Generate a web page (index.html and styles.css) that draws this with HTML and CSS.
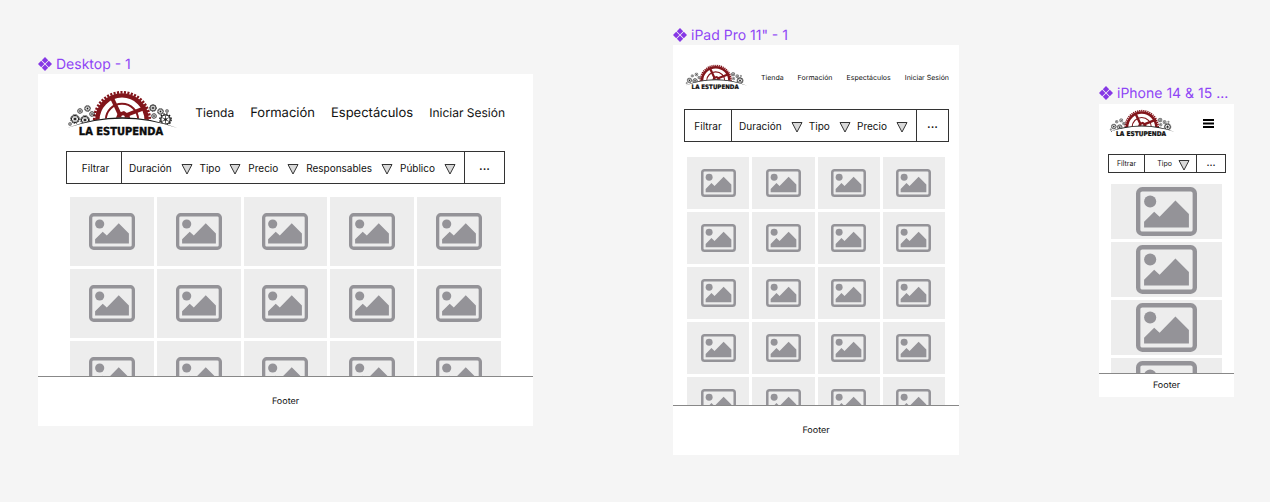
FILE: index.html
```html
<!DOCTYPE html>
<html lang="es">
<head>
<meta charset="utf-8">
<title>La Estupenda</title>
<link rel="stylesheet" href="styles.css">
</head>
<body>
<svg class="defs" aria-hidden="true">
  <symbol id="photo" viewBox="0 0 181 145">
    <rect x="6.5" y="6.5" width="168" height="132" rx="12" fill="none" stroke="currentColor" stroke-width="13"/>
    <circle cx="42" cy="43" r="18" fill="currentColor"/>
    <path d="M24 120V103L54 73L70 88L117 40L157 80V120Z" fill="currentColor"/>
  </symbol>
  <symbol id="tri" viewBox="0 0 12 12">
    <path d="M1 1.5H11L6 11Z" fill="#d9d9d9" stroke="#333" stroke-width="1"/>
  </symbol>
  <symbol id="component" viewBox="0 0 14 14">
    <path d="M7 0L10.2 3.2L7 6.4L3.8 3.2ZM7 7.6L10.2 10.8L7 14L3.8 10.8ZM3.2 3.8L6.4 7L3.2 10.2L0 7ZM10.8 3.8L14 7L10.8 10.2L7.6 7Z" fill="currentColor"/>
  </symbol>
  <symbol id="cog" viewBox="-10 -10 20 20">
    <circle r="8.8" fill="none" stroke="#1a1a1a" stroke-width="2" stroke-dasharray="2.5 2.1"/>
    <circle r="7.2" fill="none" stroke="#1a1a1a" stroke-width="2"/>
    <path d="M0-6V6M-5.2-3L5.2 3M-5.2 3L5.2-3" stroke="#1a1a1a" stroke-width="1.1"/>
    <circle r="2" fill="#1a1a1a"/>
  </symbol>
  <symbol id="logo" viewBox="0 0 111 46">
    <clipPath id="horizon"><path d="M0 0H111V38Q55 17 0 38Z"/></clipPath>
    <g clip-path="url(#horizon)">
      <g fill="none" stroke="#82151b">
        <circle cx="55" cy="30" r="27.7" stroke-width="2.8" stroke-dasharray="2.1 1.38"/>
        <circle cx="55" cy="30" r="24.6" stroke-width="4.4"/>
        <circle cx="55" cy="30" r="16.2" stroke-width="2"/>
        <path d="M44.5 7L53 25" stroke-width="4"/>
        <path d="M57 26L79 17.5" stroke-width="4"/>
      </g>
      <path d="M48 30L51 23L57 21L62 24.5L64 30Z" fill="#82151b"/>
      <circle cx="56" cy="27" r="1.8" fill="#fff"/>
      <use href="#cog" x="3" y="24" width="10" height="10"/>
      <use href="#cog" x="10" y="18" width="6" height="6"/>
      <use href="#cog" x="17" y="15" width="7" height="7"/>
      <use href="#cog" x="13" y="25" width="10" height="10"/>
      <use href="#cog" x="22" y="21" width="6" height="6"/>
      <use href="#cog" x="1" y="32" width="4" height="4"/>
      <use href="#cog" x="82" y="14" width="8" height="8"/>
      <use href="#cog" x="84" y="23" width="6" height="6"/>
      <use href="#cog" x="90" y="18" width="7" height="7"/>
      <use href="#cog" x="98" y="19" width="4" height="4"/>
      <use href="#cog" x="92" y="23" width="13" height="13"/>
    </g>
    <path d="M0 38Q55 16.500 110.500 38Q55 19.500 0 38Z" fill="#1a1a1a"/>
  </symbol>
</svg>

<main class="canvas">
  <section class="board desktop">
    <h2 class="board-name"><svg><use href="#component"/></svg>Desktop - 1</h2>
    <div class="frame">
      <header class="top">
        <svg class="logo" viewBox="0 0 111 46"><use href="#logo"/><text x="54" y="45" text-anchor="middle">LA ESTUPENDA</text></svg>
        <nav class="nav"><a href="#">Tienda</a><a href="#" class="wide">Formación</a><a href="#" class="wide">Espectáculos</a><a href="#">Iniciar Sesión</a></nav>
      </header>
      <div class="filters">
        <button class="lead">Filtrar</button>
        <div class="options">
          <button>Duración<svg><use href="#tri"/></svg></button>
          <button>Tipo<svg><use href="#tri"/></svg></button>
          <button>Precio<svg><use href="#tri"/></svg></button>
          <button>Responsables<svg><use href="#tri"/></svg></button>
          <button>Público<svg><use href="#tri"/></svg></button>
        </div>
        <button class="more">...</button>
      </div>
      <div class="gallery">
        <div class="card"><svg><use href="#photo"/></svg></div><div class="card"><svg><use href="#photo"/></svg></div><div class="card"><svg><use href="#photo"/></svg></div><div class="card"><svg><use href="#photo"/></svg></div><div class="card"><svg><use href="#photo"/></svg></div>
        <div class="card"><svg><use href="#photo"/></svg></div><div class="card"><svg><use href="#photo"/></svg></div><div class="card"><svg><use href="#photo"/></svg></div><div class="card"><svg><use href="#photo"/></svg></div><div class="card"><svg><use href="#photo"/></svg></div>
        <div class="card"><svg><use href="#photo"/></svg></div><div class="card"><svg><use href="#photo"/></svg></div><div class="card"><svg><use href="#photo"/></svg></div><div class="card"><svg><use href="#photo"/></svg></div><div class="card"><svg><use href="#photo"/></svg></div>
      </div>
      <footer class="foot">Footer</footer>
    </div>
  </section>

  <section class="board tablet">
    <h2 class="board-name"><svg><use href="#component"/></svg>iPad Pro 11" - 1</h2>
    <div class="frame">
      <header class="top">
        <svg class="logo" viewBox="0 0 111 46"><use href="#logo"/><text x="54" y="45" text-anchor="middle">LA ESTUPENDA</text></svg>
        <nav class="nav"><a href="#">Tienda</a><a href="#">Formación</a><a href="#">Espectáculos</a><a href="#">Iniciar Sesión</a></nav>
      </header>
      <div class="filters">
        <button class="lead">Filtrar</button>
        <div class="options">
          <button>Duración<svg><use href="#tri"/></svg></button>
          <button>Tipo<svg><use href="#tri"/></svg></button>
          <button>Precio<svg><use href="#tri"/></svg></button>
        </div>
        <button class="more">...</button>
      </div>
      <div class="gallery">
        <div class="card"><svg><use href="#photo"/></svg></div><div class="card"><svg><use href="#photo"/></svg></div><div class="card"><svg><use href="#photo"/></svg></div><div class="card"><svg><use href="#photo"/></svg></div>
        <div class="card"><svg><use href="#photo"/></svg></div><div class="card"><svg><use href="#photo"/></svg></div><div class="card"><svg><use href="#photo"/></svg></div><div class="card"><svg><use href="#photo"/></svg></div>
        <div class="card"><svg><use href="#photo"/></svg></div><div class="card"><svg><use href="#photo"/></svg></div><div class="card"><svg><use href="#photo"/></svg></div><div class="card"><svg><use href="#photo"/></svg></div>
        <div class="card"><svg><use href="#photo"/></svg></div><div class="card"><svg><use href="#photo"/></svg></div><div class="card"><svg><use href="#photo"/></svg></div><div class="card"><svg><use href="#photo"/></svg></div>
        <div class="card"><svg><use href="#photo"/></svg></div><div class="card"><svg><use href="#photo"/></svg></div><div class="card"><svg><use href="#photo"/></svg></div><div class="card"><svg><use href="#photo"/></svg></div>
      </div>
      <footer class="foot">Footer</footer>
    </div>
  </section>

  <section class="board phone">
    <h2 class="board-name"><svg><use href="#component"/></svg>iPhone 14 &amp; 15 ...</h2>
    <div class="frame">
      <header class="top">
        <svg class="logo" viewBox="0 0 111 46"><use href="#logo"/><text x="54" y="45" text-anchor="middle">LA ESTUPENDA</text></svg>
        <button class="menu" aria-label="Menú"><svg viewBox="0 0 11 9"><path d="M0 1H11M0 4.500H11M0 8H11" stroke="#000" stroke-width="1.800"/></svg></button>
      </header>
      <div class="filters">
        <button class="lead">Filtrar</button>
        <div class="options">
          <button>Tipo<svg><use href="#tri"/></svg></button>
        </div>
        <button class="more">...</button>
      </div>
      <div class="gallery">
        <div class="card"><svg><use href="#photo"/></svg></div>
        <div class="card"><svg><use href="#photo"/></svg></div>
        <div class="card"><svg><use href="#photo"/></svg></div>
        <div class="card"><svg><use href="#photo"/></svg></div>
      </div>
      <footer class="foot">Footer</footer>
    </div>
  </section>
</main>
</body>
</html>
```
FILE: styles.css
```css
* { box-sizing: border-box; }

body {
  margin: 0;
  background: #f5f5f5;
  color: #111;
  font-family: Inter, "Liberation Sans", sans-serif;
  text-rendering: geometricPrecision;
}

.defs { position: absolute; width: 0; height: 0; }
svg { display: block; flex: none; }
button { border: 0; padding: 0; background: none; color: inherit; font: inherit; }

.logo { overflow: visible; }
.logo text {
  font: bold 11px "DejaVu Sans Condensed", "DejaVu Sans", sans-serif;
  fill: #0b0b0b;
  stroke: #0b0b0b;
  stroke-width: 0.4px;
}

/* Canvas with three boards */
.canvas {
  display: grid;
  grid-template-columns: 495fr 286fr 135fr;
  column-gap: 140px;
  align-items: start;
  padding: 25px 36px 46px 38px;
}
.board { min-width: 0; }
.desktop { padding-top: 29px; }
.phone { padding-top: 59px; }

.board-name {
  display: flex;
  align-items: center;
  gap: 4px;
  height: 20px;
  margin: 0;
  color: #8f45f5;
  font-size: 14px;
  font-weight: 400;
  white-space: nowrap;
}
.board-name svg { width: 14px; height: 14px; color: #8638e5; }

.frame { background: #fff; }

.top { display: flex; align-items: center; justify-content: space-between; }
.nav { display: flex; align-items: center; gap: 14px; white-space: nowrap; }
.nav a { color: inherit; text-decoration: none; }

/* Filter bar */
.filters {
  display: flex;
  height: 33px;
  border: 1px solid #333;
  font-size: 10px;
}
.lead { border-right: 1px solid #333; }
.options { flex: 1; display: flex; align-items: center; justify-content: space-between; padding: 0 8px 0 7px; }
.options button { display: flex; align-items: center; gap: 9px; }
.options svg { width: 12px; height: 12px; margin-top: 2px; }
.more { border-left: 1px solid #333; padding-bottom: 4px; font-size: 12px; font-weight: 500; }

/* Picture grid, cut off by the footer */
.gallery { display: grid; align-content: start; gap: 3px; overflow: hidden; }
.card { display: flex; align-items: center; justify-content: center; background: #ededed; color: #949398; }

.foot {
  display: flex;
  align-items: center;
  justify-content: center;
  border-top: 1px solid #888;
  font-size: 9px;
}

/* Desktop */
.desktop .top { height: 77px; padding: 0 28px 0 29px; }
.desktop .logo { width: 111px; height: 46px; }
.desktop .nav { gap: 16px; font-size: 12px; }
.desktop .nav .wide { font-size: 13px; }
.desktop .filters { margin: 0 28px; }
.desktop .lead { width: 55px; padding-left: 3px; }
.desktop .more { width: 40px; }
.desktop .gallery { grid-template-columns: repeat(5, 1fr); grid-auto-rows: 69px; height: 179px; margin: 13px 32px 0; }
.desktop .card svg { width: 46px; height: 37px; }
.desktop .foot { height: 50px; }

/* Tablet */
.tablet .top { height: 64px; padding: 0 10px 0 12px; }
.tablet .logo { width: 62px; height: 26px; }
.tablet .nav { font-size: 7px; }
.tablet .filters { margin: 0 10px 0 11px; }
.tablet .lead { width: 47px; }
.tablet .more { width: 32px; }
.tablet .gallery { grid-template-columns: repeat(4, 1fr); grid-auto-rows: 52px; height: 248px; margin: 15px 14px 0; }
.tablet .card svg { width: 35px; height: 28px; }
.tablet .foot { height: 50px; }

/* Phone */
.phone .board-name { padding-bottom: 2px; }
.phone .top { height: 50px; padding: 0 20px 12px 10px; }
.phone .logo { width: 66px; height: 28px; }
.phone .menu svg { width: 11px; height: 9px; }
.phone .filters { height: 19px; margin: 0 8px 0 9px; font-size: 7px; }
.phone .lead { width: 36px; }
.phone .options { justify-content: flex-end; padding-right: 6px; }
.phone .options button { gap: 6px; }
.phone .more { width: 29px; font-size: 10px; line-height: 10px; }
.phone .gallery { grid-auto-rows: 55px; height: 189px; margin: 11px 12px 0; }
.phone .card svg { width: 61px; height: 49px; }
.phone .foot { height: 24px; }
```
